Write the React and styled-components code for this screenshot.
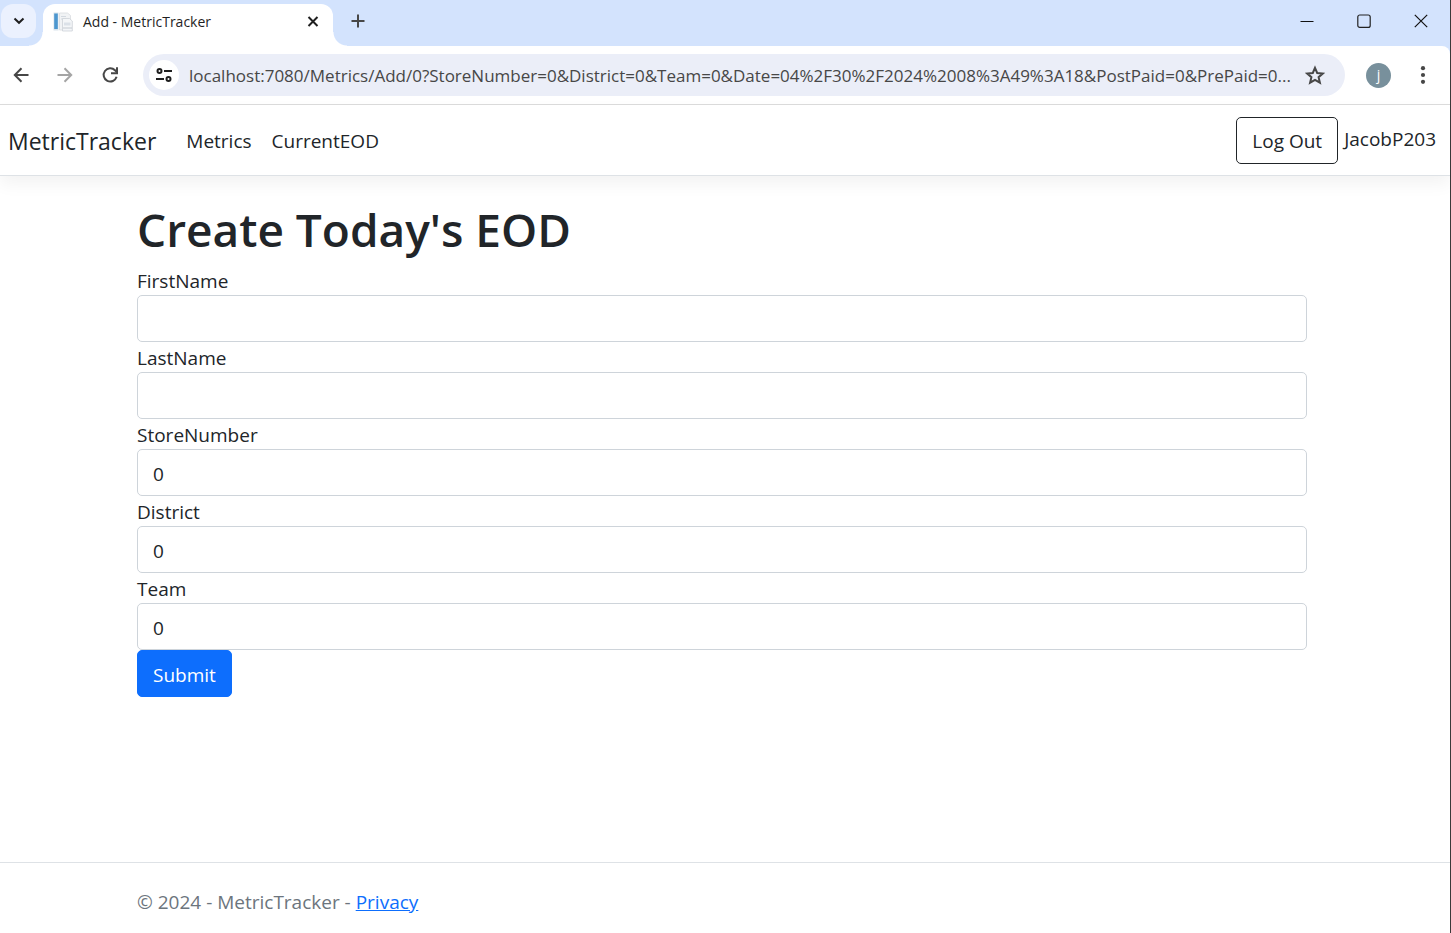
import React from "react";
import styled, { createGlobalStyle } from "styled-components";

const Global = createGlobalStyle`
  *, *::before, *::after { box-sizing: border-box; }
  body { margin: 0; background: #fff; color: #212529; font: 400 19px/30px "Open Sans", "Noto Sans", sans-serif; }
  button, input { font: inherit; color: inherit; margin: 0; }
`;

const Window = styled.div`
  min-height: 100vh;
  display: flex;
  flex-direction: column;
  border-right: 1px solid #3a3a3a;
  background: #fff;
`;

const BrowserChrome = styled.div`
  background: #d3e3fd;
`;

const TabStrip = styled.div`
  height: 46px;
  display: flex;
  align-items: flex-end;
`;

const IconButton = styled.button`
  width: ${(p) => p.$width || 44}px;
  height: ${(p) => p.$height || 40}px;
  flex: none;
  display: flex;
  align-items: center;
  justify-content: center;
  padding: 0;
  border: 0;
  border-radius: ${(p) => p.$radius || 0}px;
  background: ${(p) => p.$fill || "transparent"};
  color: ${(p) => p.$color || "#474747"};
`;

const SearchSlot = styled.div`
  height: 46px;
  padding: 4px 7px 0 1px;
`;

const Tab = styled.div`
  position: relative;
  width: 290px;
  height: 42px;
  flex: none;
  display: flex;
  align-items: center;
  padding: 0 0 6px 10px;
  border-radius: 12px 12px 0 0;
  background: #fff;
  &::before, &::after {
    content: "";
    position: absolute;
    bottom: 0;
    width: 14px;
    height: 14px;
  }
  &::before { right: 100%; background: radial-gradient(circle at 0 0, transparent 13px, #fff 14px); }
  &::after { left: 100%; background: radial-gradient(circle at 100% 0, transparent 13px, #fff 14px); }
`;

const TabTitle = styled.span`
  flex: 1;
  padding-left: 10px;
  font-size: 14px;
  line-height: 20px;
  color: #1f1f1f;
`;

const NewTabSlot = styled.div`
  flex: 1;
  height: 42px;
  padding-left: 3px;
`;

const WindowControls = styled.div`
  align-self: stretch;
  display: flex;
  padding-right: 1px;
`;

const Toolbar = styled.div`
  height: 59px;
  display: flex;
  align-items: center;
  border-bottom: 1px solid #dcdcdc;
  border-radius: 0 8px 0 0;
  background: #fff;
`;

const NavButtons = styled.div`
  display: flex;
  width: 143px;
  flex: none;
`;

const AddressBar = styled.div`
  flex: 1;
  min-width: 0;
  height: 42px;
  display: flex;
  align-items: center;
  padding: 0 8px 0 6px;
  border-radius: 21px;
  background: #ebeef8;
`;

const UrlInput = styled.input`
  flex: 1;
  min-width: 0;
  height: 30px;
  padding: 2px 0 0 10px;
  border: 0;
  outline: 0;
  background: transparent;
  color: #474747;
  font-size: 17px;
  text-overflow: ellipsis;
`;

const Profile = styled.button`
  width: 25px;
  height: 25px;
  flex: none;
  margin: 0 5px 0 21px;
  padding: 0;
  border: 0;
  border-radius: 50%;
  background: #78909c;
  color: #fff;
  font-size: 14px;
  line-height: 22px;
`;

const NavBar = styled.header`
  height: 71px;
  flex: none;
  display: flex;
  align-items: center;
  padding: 0 14px 0 8px;
  border-bottom: 1px solid #dee2e6;
  box-shadow: 0 8px 16px rgba(0, 0, 0, 0.05);
`;

const Brand = styled.a`
  margin-right: 30px;
  padding-top: 2px;
  color: #212529;
  font-size: 23px;
  text-decoration: none;
`;

const Links = styled.nav`
  flex: 1;
  display: flex;
  gap: 20px;
  padding-top: 2px;
`;

const NavLink = styled.a`
  color: #212529;
  text-decoration: none;
`;

const Button = styled.button`
  height: 47px;
  padding: 2px 15px 0;
  border: 1px solid ${(p) => (p.$primary ? "#0d6efd" : "#212529")};
  border-radius: 5px;
  background: ${(p) => (p.$primary ? "#0d6efd" : "#fff")};
  color: ${(p) => (p.$primary ? "#fff" : "#212529")};
`;

const UserName = styled.span`
  padding: 0 0 2px 6px;
`;

const Container = styled.div`
  width: calc(100% - 30px);
  max-width: 1170px;
  margin: 0 auto;
`;

const Main = styled.main`
  flex: 1;
  padding: 23px 6px 20px 0;
`;

const Title = styled.h1`
  margin: 0 0 6px;
  font-size: 46px;
  font-weight: 600;
  line-height: 60px;
`;

const Field = styled.div`
  display: flex;
  flex-direction: column;
`;

const Label = styled.label`
  padding-top: 2px;
  line-height: 28px;
`;

const TextBox = styled.input`
  width: 100%;
  height: 47px;
  padding: 2px 15px 0;
  border: 1px solid #ced4da;
  border-radius: 5px;
  background: #fff;
`;

const Footer = styled.footer`
  padding: 24px 6px 16px 0;
  border-top: 1px solid #dee2e6;
  color: #6c757d;
`;

const FooterLink = styled.a`
  color: #0d6efd;
  text-decoration: underline;
`;

const Svg = ({ w = 20, h = w, sw = 2, children }) => (
  <svg width={w} height={h} viewBox={`0 0 ${w} ${h}`} fill="none" stroke="currentColor" strokeWidth={sw} aria-hidden="true">
    {children}
  </svg>
);

const FaviconIcon = () => (
  <svg width="20" height="20" viewBox="0 0 20 20" aria-hidden="true">
    <rect x="0.5" y="0.5" width="5" height="18" fill="#d9e4ec" />
    <rect x="1.2" y="1.5" width="3.6" height="15.5" fill="#4d97cf" />
    <path d="M6.500 1h8l3 2.500V18h-11z" fill="#f1f3f5" stroke="#d9dce0" strokeWidth="0.8" />
    <path d="M8 4.500h5M8 7h5" stroke="#d3d9e0" />
    <path d="M9.500 6.500h7l2.800 2.500v10H9.500z" fill="#f4f6f8" stroke="#cdd2d8" strokeWidth="0.8" />
    <rect x="11" y="10.500" width="6.500" height="3" fill="#dbe1e8" />
    <path d="M10 16h9" stroke="#c4cad1" />
  </svg>
);

const fields = [
  { name: "FirstName", value: "" },
  { name: "LastName", value: "" },
  { name: "StoreNumber", value: "0" },
  { name: "District", value: "0" },
  { name: "Team", value: "0" },
];

const url =
  "localhost:7080/Metrics/Add/0?StoreNumber=0&District=0&Team=0&Date=04%2F30%2F2024%2008%3A49%3A18&PostPaid=0&PrePaid=0...";

export default function App() {
  return (
    <Window>
      <Global />
      <BrowserChrome>
        <TabStrip>
          <SearchSlot>
            <IconButton aria-label="Search tabs" $width={35} $height={34} $radius={12} $fill="#ebf1fe" $color="#1f1f1f">
              <Svg w={12}><path d="M1.500 3.500l4.500 4.300L10.500 3.500" /></Svg>
            </IconButton>
          </SearchSlot>
          <Tab>
            <FaviconIcon />
            <TabTitle>Add - MetricTracker</TabTitle>
            <IconButton aria-label="Close tab" $width={40} $height={34} $color="#1f1f1f">
              <Svg w={12}><path d="M1.500 1l9 9M10.500 1l-9 9" /></Svg>
            </IconButton>
          </Tab>
          <NewTabSlot>
            <IconButton aria-label="New tab" $height={34}>
              <Svg w={14}><path d="M7 0.500v13M0.500 7h13" /></Svg>
            </IconButton>
          </NewTabSlot>
          <WindowControls>
            <IconButton aria-label="Minimize" $width={57} $height={42} $color="#111">
              <Svg w={14} sw={1}><path d="M0.500 7.500h13" /></Svg>
            </IconButton>
            <IconButton aria-label="Maximize" $width={57} $height={42} $color="#222">
              <Svg w={14} sw={1.2}><rect x="0.800" y="1" width="12.400" height="12.400" rx="2" /></Svg>
            </IconButton>
            <IconButton aria-label="Close" $width={57} $height={42} $color="#111">
              <Svg w={14} sw={1.2}><path d="M0.800 0.800l12.400 12.400M13.200 0.800L0.800 13.200" /></Svg>
            </IconButton>
          </WindowControls>
        </TabStrip>
        <Toolbar>
          <NavButtons>
            <IconButton aria-label="Back" $width={42}>
              <Svg w={16}><path d="M15.500 8H2M8.500 1.300L1.800 8l6.700 6.700" /></Svg>
            </IconButton>
            <IconButton aria-label="Forward" $width={46} $color="#a5a5a5">
              <Svg w={16}><path d="M0.500 8H14M7.500 1.300L14.200 8l-6.700 6.700" /></Svg>
            </IconButton>
            <IconButton aria-label="Reload">
              <Svg w={18}>
                <path d="M15.600 10.800A6.600 6.600 0 1 1 14 4.300L16 6.300" />
                <path d="M16 1.200v6h-6" />
              </Svg>
            </IconButton>
          </NavButtons>
          <AddressBar>
            <IconButton aria-label="View site information" $width={30} $height={30} $radius={15} $fill="#fff" $color="#1f1f1f">
              <Svg w={16}>
                <circle cx="3.500" cy="4" r="2" />
                <path d="M8 4h8M0 12h8" />
                <circle cx="12.500" cy="12" r="2" />
              </Svg>
            </IconButton>
            <UrlInput aria-label="Address" defaultValue={url} spellCheck={false} />
            <IconButton aria-label="Bookmark this tab" $height={36}>
              <Svg w={20}>
                <path d="M10 2.800l2.200 5.200 5.600 0.500-4.200 3.700 1.300 5.500-4.900-2.900-4.900 2.900 1.300-5.500-4.200-3.700 5.600-0.500z" />
              </Svg>
            </IconButton>
          </AddressBar>
          <Profile aria-label="Profile j">j</Profile>
          <IconButton aria-label="Menu" $width={54}>
            <Svg w={6} h={20} sw={0}>
              <g fill="currentColor">
                <circle cx="3" cy="3.200" r="2.100" /><circle cx="3" cy="10" r="2.100" /><circle cx="3" cy="16.800" r="2.100" />
              </g>
            </Svg>
          </IconButton>
        </Toolbar>
      </BrowserChrome>
      <NavBar>
        <Brand href="#home">MetricTracker</Brand>
        <Links>
          <NavLink href="#metrics">Metrics</NavLink>
          <NavLink href="#eod">CurrentEOD</NavLink>
        </Links>
        <Button type="button">Log Out</Button>
        <UserName>JacobP203</UserName>
      </NavBar>
      <Main>
        <Container as="form" onSubmit={(e) => e.preventDefault()}>
          <Title>Create Today's EOD</Title>
          {fields.map((f) => (
            <Field key={f.name}>
              <Label htmlFor={f.name}>{f.name}</Label>
              <TextBox id={f.name} name={f.name} type="text" defaultValue={f.value} />
            </Field>
          ))}
          <Button type="submit" $primary>Submit</Button>
        </Container>
      </Main>
      <Footer>
        <Container>
          © 2024 - MetricTracker - <FooterLink href="#privacy">Privacy</FooterLink>
        </Container>
      </Footer>
    </Window>
  );
}
